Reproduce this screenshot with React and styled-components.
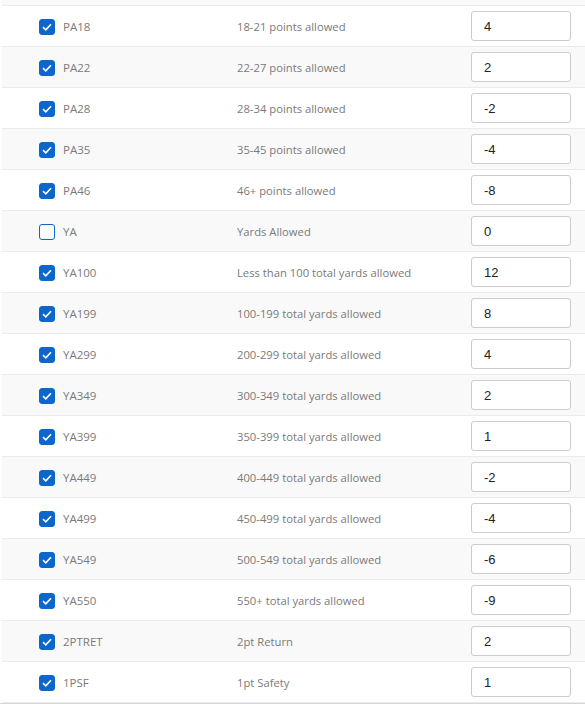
import React, { useState } from 'react';
import styled, { createGlobalStyle } from 'styled-components';

const GlobalStyle = createGlobalStyle`
  body {
    margin: 0;
    background: #fff;
    font-family: "Open Sans", "Liberation Sans", sans-serif;
  }
`;

const rows = [
  { code: 'PA18', desc: '18-21 points allowed', value: '4', on: true },
  { code: 'PA22', desc: '22-27 points allowed', value: '2', on: true },
  { code: 'PA28', desc: '28-34 points allowed', value: '-2', on: true },
  { code: 'PA35', desc: '35-45 points allowed', value: '-4', on: true },
  { code: 'PA46', desc: '46+ points allowed', value: '-8', on: true },
  { code: 'YA', desc: 'Yards Allowed', value: '0', on: false },
  { code: 'YA100', desc: 'Less than 100 total yards allowed', value: '12', on: true },
  { code: 'YA199', desc: '100-199 total yards allowed', value: '8', on: true },
  { code: 'YA299', desc: '200-299 total yards allowed', value: '4', on: true },
  { code: 'YA349', desc: '300-349 total yards allowed', value: '2', on: true },
  { code: 'YA399', desc: '350-399 total yards allowed', value: '1', on: true },
  { code: 'YA449', desc: '400-449 total yards allowed', value: '-2', on: true },
  { code: 'YA499', desc: '450-499 total yards allowed', value: '-4', on: true },
  { code: 'YA549', desc: '500-549 total yards allowed', value: '-6', on: true },
  { code: 'YA550', desc: '550+ total yards allowed', value: '-9', on: true },
  { code: '2PTRET', desc: '2pt Return', value: '2', on: true },
  { code: '1PSF', desc: '1pt Safety', value: '1', on: true },
];

const Table = styled.div`
  padding-left: 2px;
  border-bottom: 1px solid #d6d6d6;
`;

const TopStrip = styled.div`
  height: 5px;
  background: #f9f9f9;
  border-bottom: 1px solid #ebebeb;
`;

const Row = styled.div`
  display: grid;
  grid-template-columns: 16px 166px 1fr 100px;
  column-gap: 8px;
  align-items: center;
  height: 40px;
  padding: 0 14px 0 37px;
  background: ${(p) => (p.$alt ? '#f9f9f9' : '#fff')};
  border-bottom: 1px solid #ebebeb;
`;

const Box = styled.span`
  width: 16px;
  height: 16px;
  box-sizing: border-box;
  border-radius: 3px;
  margin-top: 2px;
  display: flex;
  align-items: center;
  justify-content: center;
  background: ${(p) => (p.$on ? '#0b67cc' : '#fff')};
  border: 1px solid #0b67cc;
  cursor: pointer;
`;

const Code = styled.span`
  font-size: 11.5px;
  color: #7a7a7a;
`;

const Desc = styled.span`
  font-size: 11.25px;
  color: #7a7a7a;
`;

const Field = styled.input`
  width: 100px;
  height: 30px;
  box-sizing: border-box;
  border: 1px solid #cccccc;
  border-radius: 3px;
  padding: 0 12px;
  font-family: "Liberation Sans", Arial, sans-serif;
  font-size: 13px;
  color: #222;
  background: #fff;
  outline: none;
`;

const Check = ({ on, onClick }) => (
  <Box $on={on} onClick={onClick}>
    {on && (
      <svg width="10" height="8" viewBox="0 0 10 8">
        <path d="M1 4.2 L3.8 6.8 L9 1.2" fill="none" stroke="#fff" strokeWidth="1.6" />
      </svg>
    )}
  </Box>
);

const App = () => {
  const [items, setItems] = useState(rows);

  const toggle = (i) => {
    setItems(items.map((r, j) => (j === i ? { ...r, on: !r.on } : r)));
  };

  const change = (i, v) => {
    setItems(items.map((r, j) => (j === i ? { ...r, value: v } : r)));
  };

  return (
    <>
      <GlobalStyle />
      <Table>
        <TopStrip />
        {items.map((r, i) => (
          <Row key={r.code} $alt={i % 2 === 1}>
            <Check on={r.on} onClick={() => toggle(i)} />
            <Code>{r.code}</Code>
            <Desc>{r.desc}</Desc>
            <Field value={r.value} onChange={(e) => change(i, e.target.value)} />
          </Row>
        ))}
      </Table>
    </>
  );
};

export default App;
